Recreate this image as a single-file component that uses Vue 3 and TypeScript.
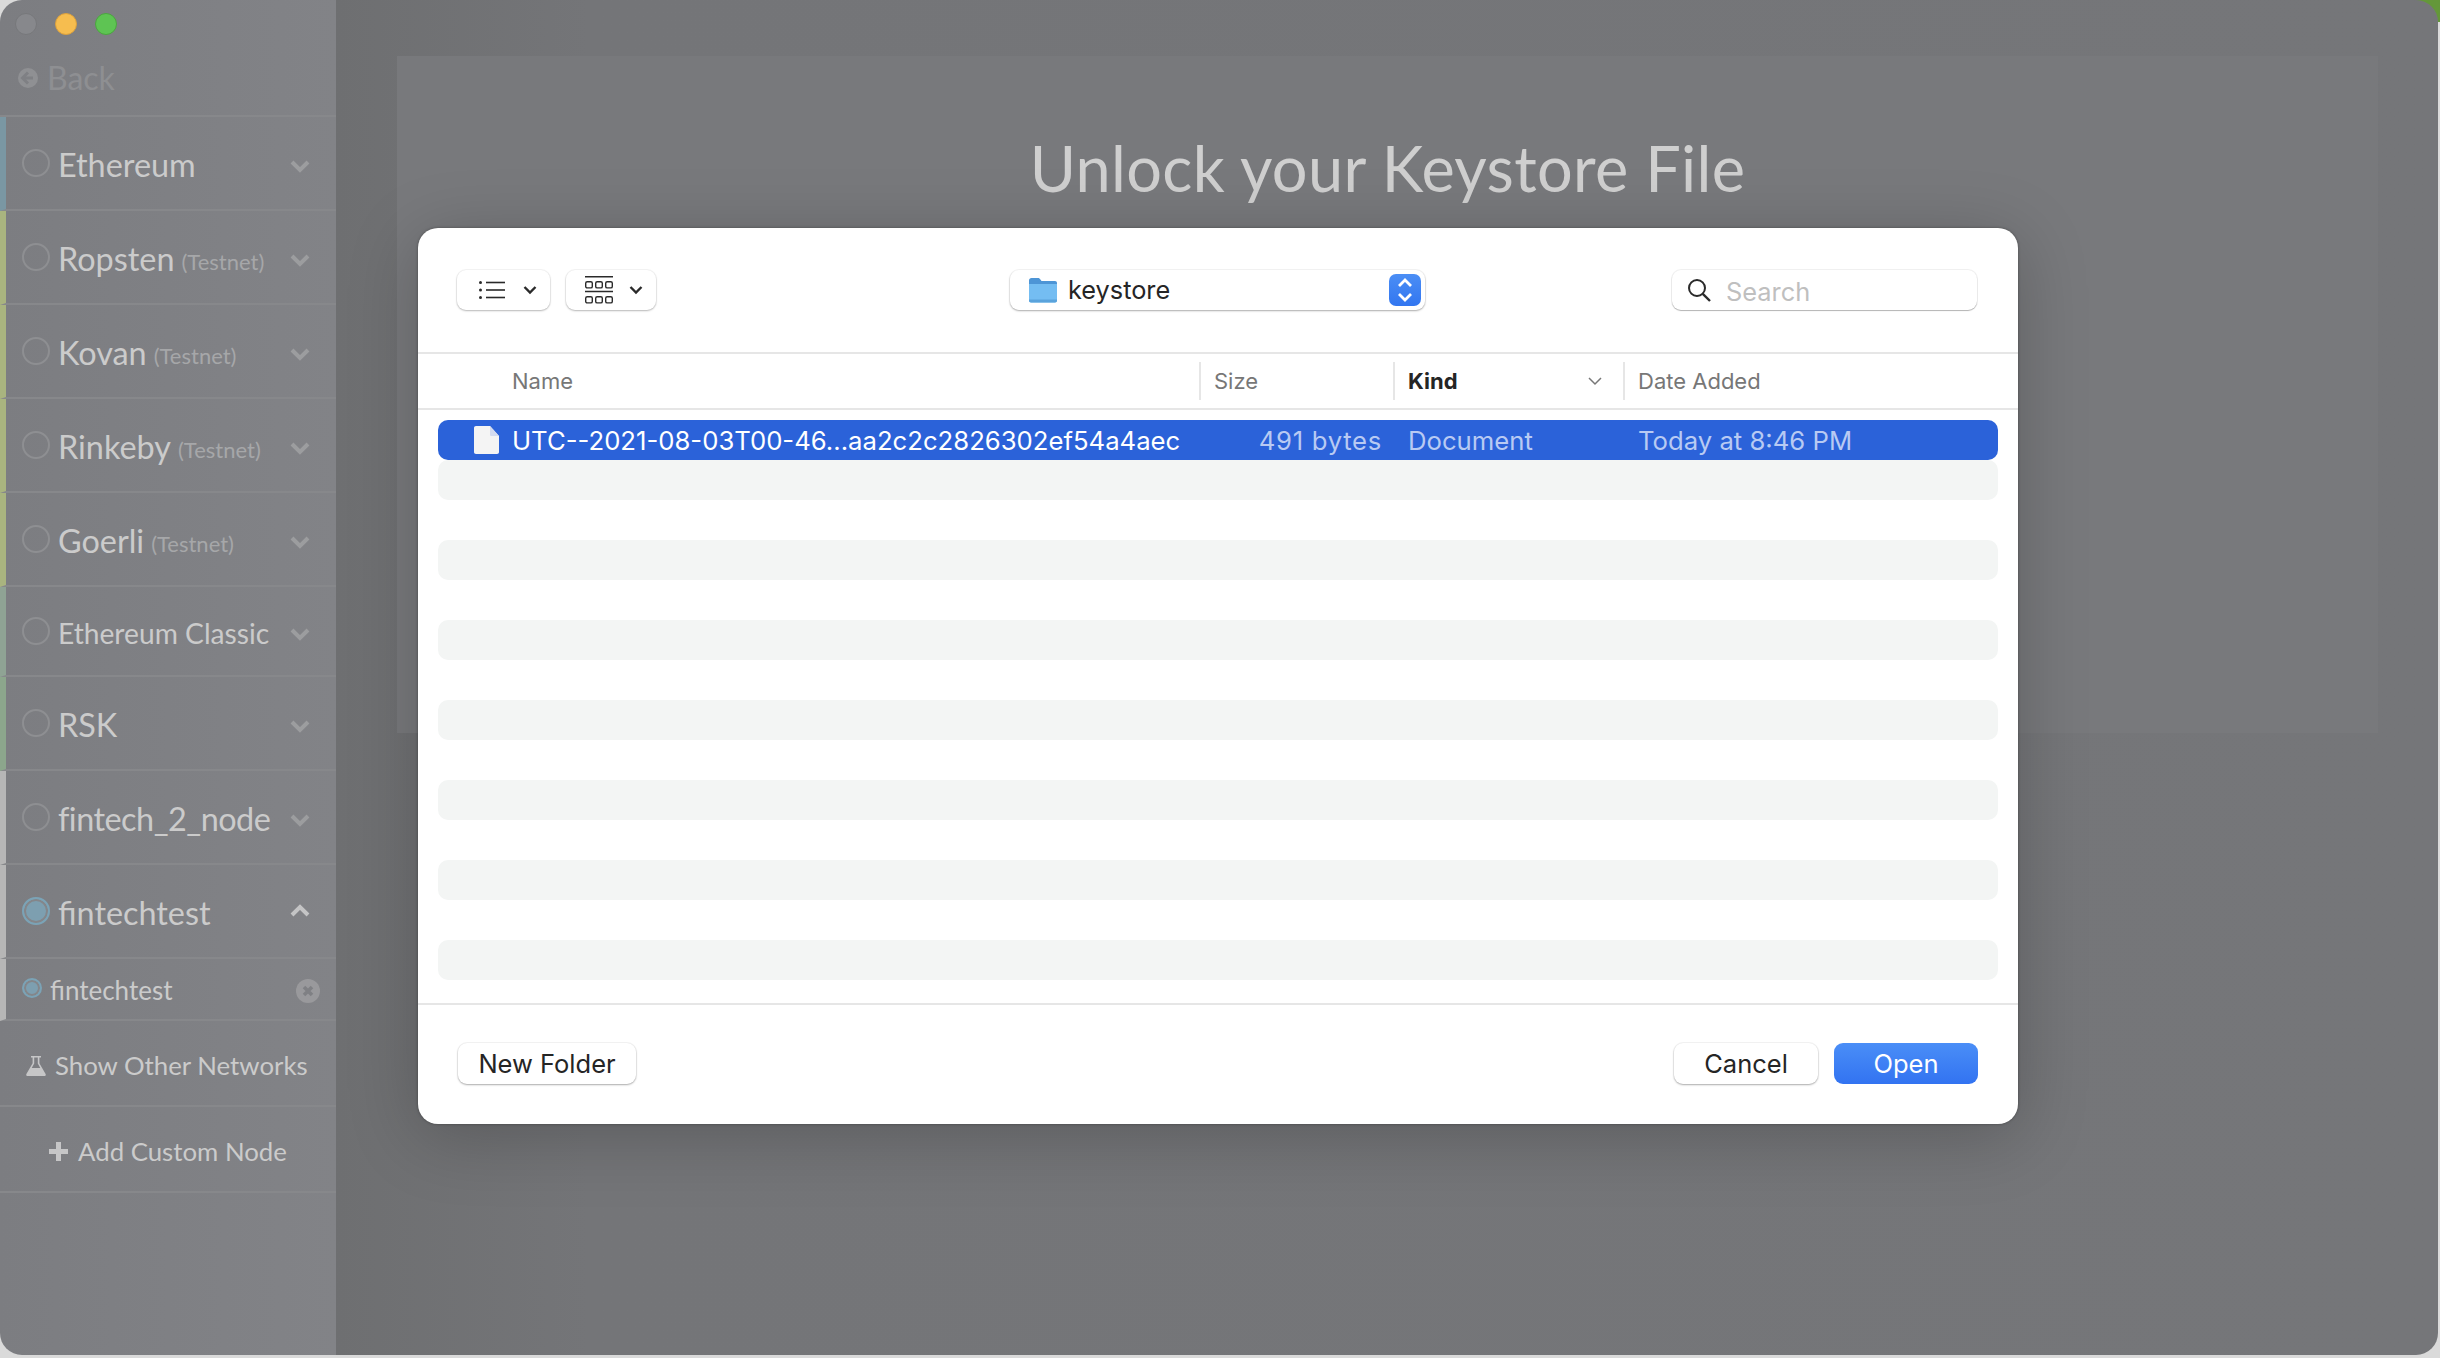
<script setup lang="ts">
interface Network {
  name: string;
  testnet?: boolean;
  color: string;
  small?: boolean;
  tight?: boolean;
}

const networks: Network[] = [
  { name: 'Ethereum', color: '#7a97a3' },
  { name: 'Ropsten', testnet: true, color: '#a9b47f' },
  { name: 'Kovan', testnet: true, color: '#a9b47f' },
  { name: 'Rinkeby', testnet: true, color: '#a9b47f' },
  { name: 'Goerli', testnet: true, color: '#a9b47f' },
  { name: 'Ethereum Classic', color: '#8fa394', small: true },
  { name: 'RSK', color: '#8ca68c' },
  { name: 'fintech_2_node', color: '#b6b6b6', tight: true },
];

const stripes = 13;
</script>

<template>
  <div class="page">
    <div class="corner"></div>
    <div class="window">
      <aside class="sidebar">
        <div class="head">
          <div class="lights">
            <span class="light close"></span>
            <span class="light min"></span>
            <span class="light max"></span>
          </div>
          <div class="back">
            <svg width="20" height="20" viewBox="0 0 20 20">
              <circle cx="10" cy="10" r="10" fill="#8f9093" />
              <path d="M10 4.5 4.500 10l5.500 5.500M5 10h10" fill="none" stroke="#7f8084" stroke-width="3" />
            </svg>
            <span>Back</span>
          </div>
        </div>

        <div
          v-for="net in networks"
          :key="net.name"
          class="net"
          :class="{ small: net.small, tight: net.tight }"
          :style="{ borderLeftColor: net.color }"
        >
          <span class="radio"></span>
          <span class="net-name">{{ net.name }}</span>
          <span v-if="net.testnet" class="tag">(Testnet)</span>
          <svg class="chev" width="20" height="14" viewBox="0 0 20 14">
            <path d="M2 3l8 8 8-8" fill="none" stroke="#9c9d9f" stroke-width="4" />
          </svg>
        </div>

        <div class="net active">
          <span class="radio on"></span>
          <span class="net-name">fintechtest</span>
          <svg class="chev up" width="20" height="14" viewBox="0 0 20 14">
            <path d="M2 11l8-8 8 8" fill="none" stroke="#c4c4c5" stroke-width="4" />
          </svg>
        </div>
        <div class="net sub">
          <span class="radio on mini"></span>
          <span class="sub-name">fintechtest</span>
          <svg class="remove" width="24" height="24" viewBox="0 0 24 24">
            <circle cx="12" cy="12" r="12" fill="#99999c" />
            <path d="M8 8l8 8M16 8l-8 8" stroke="#7f8084" stroke-width="3.600" />
          </svg>
        </div>

        <div class="action show">
          <svg width="20" height="21" viewBox="0 0 20 21">
            <path d="M5 1h10v1.600h-1.600v5.600L19.600 19c.5 1-.1 2-1.200 2H1.600C.5 21-.1 20 .4 19L6.600 8.200V2.600H5zM8.200 2.600v6L5.700 13h8.600l-2.500-4.400v-6z" fill="#c6c6c7" fill-rule="evenodd" />
          </svg>
          <span>Show Other Networks</span>
        </div>
        <div class="action add">
          <svg width="19" height="19" viewBox="0 0 19 19">
            <path d="M7 0h5v7h7v5h-7v7H7v-7H0V7h7z" fill="#c6c6c7" />
          </svg>
          <span>Add Custom Node</span>
        </div>
      </aside>

      <main class="main">
        <section class="panel">
          <h1 class="title">Unlock your Keystore File</h1>
        </section>
      </main>
    </div>

    <div class="dialog">
      <div class="toolbar">
        <div class="views">
          <button class="tool list-btn">
            <svg width="26" height="18" viewBox="0 0 26 18">
              <g fill="#2a2a2a">
                <circle cx="1.500" cy="1.500" r="1.500" />
                <circle cx="1.500" cy="9" r="1.500" />
                <circle cx="1.500" cy="16.500" r="1.500" />
                <rect x="7" y="0.700" width="19" height="1.600" />
                <rect x="7" y="8.200" width="19" height="1.600" />
                <rect x="7" y="15.700" width="19" height="1.600" />
              </g>
            </svg>
            <svg class="tool-chev" width="14" height="10" viewBox="0 0 14 10">
              <path d="M1.500 2 7 7.500 12.500 2" fill="none" stroke="#2a2a2a" stroke-width="2.400" />
            </svg>
          </button>
          <button class="tool grid-btn">
            <svg width="28" height="28" viewBox="0 0 28 28">
              <g fill="none" stroke="#2a2a2a">
                <path d="M0 .8h28M0 15.500h28" stroke-width="1.500" />
                <rect x=".7" y="5.700" width="6.600" height="6.200" rx="1.500" stroke-width="1.400" />
                <rect x="10.700" y="5.700" width="6.600" height="6.200" rx="1.500" stroke-width="1.400" />
                <rect x="20.700" y="5.700" width="6.600" height="6.200" rx="1.500" stroke-width="1.400" />
                <rect x=".7" y="20.700" width="6.600" height="6.200" rx="1.500" stroke-width="1.400" />
                <rect x="10.700" y="20.700" width="6.600" height="6.200" rx="1.500" stroke-width="1.400" />
                <rect x="20.700" y="20.700" width="6.600" height="6.200" rx="1.500" stroke-width="1.400" />
              </g>
            </svg>
            <svg class="tool-chev" width="14" height="10" viewBox="0 0 14 10">
              <path d="M1.500 2 7 7.500 12.500 2" fill="none" stroke="#2a2a2a" stroke-width="2.400" />
            </svg>
          </button>
        </div>

        <div class="path">
          <svg class="folder" width="30" height="28" viewBox="0 0 30 28">
            <path d="M1 4.500C1 3 2 2 3.500 2H10c1 0 1.500.4 2.200 1.200L13.500 5H27c1.200 0 2 .8 2 2v4H1z" fill="#4d95d6" />
            <path d="M1 8h28v16.500c0 1.200-.8 2-2 2H3c-1.200 0-2-.8-2-2z" fill="#74bdf2" />
            <path d="M1 23.500h28v1c0 1.200-.8 2-2 2H3c-1.200 0-2-.8-2-2z" fill="#5aa3dc" />
          </svg>
          <span class="path-name">keystore</span>
          <span class="stepper">
            <svg width="18" height="28" viewBox="0 0 18 28">
              <path d="M3 10l6-6 6 6M3 18l6 6 6-6" fill="none" stroke="#fff" stroke-width="2.800" />
            </svg>
          </span>
        </div>

        <div class="search">
          <svg width="24" height="24" viewBox="0 0 24 24">
            <circle cx="10" cy="10" r="8" fill="none" stroke="#2a2a2a" stroke-width="2" />
            <path d="M15.800 15.800 23 23" stroke="#2a2a2a" stroke-width="2.400" />
          </svg>
          <span>Search</span>
        </div>
      </div>

      <div class="columns">
        <div class="col">Name</div>
        <div class="col ruled">Size</div>
        <div class="col ruled sorted">
          <b>Kind</b>
          <svg width="14" height="10" viewBox="0 0 14 10">
            <path d="M1 2l6 6 6-6" fill="none" stroke="#777" stroke-width="1.500" />
          </svg>
        </div>
        <div class="col ruled">Date Added</div>
      </div>

      <div class="files">
        <div class="file selected">
          <div class="file-name">
            <svg width="25" height="28" viewBox="0 0 25 28">
              <path d="M2 0h14l9 10v16c0 1.200-.8 2-2 2H2c-1.200 0-2-.8-2-2V2C0 .8.800 0 2 0z" fill="#f4f4f4" />
              <path d="M16 0l9 10h-7.500c-1 0-1.500-.5-1.500-1.500z" fill="#d3dbf0" />
            </svg>
            <span>UTC--2021-08-03T00-46...aa2c2c2826302ef54a4aec</span>
          </div>
          <div class="file-size">491 bytes</div>
          <div class="file-kind">Document</div>
          <div class="file-date">Today at 8:46 PM</div>
        </div>
        <div v-for="n in stripes" :key="n" class="file"></div>
      </div>

      <div class="footer">
        <button class="btn wide">New Folder</button>
        <div class="actions">
          <button class="btn">Cancel</button>
          <button class="btn primary">Open</button>
        </div>
      </div>
    </div>
  </div>
</template>

<style scoped>
.page {
  position: relative;
  width: 2440px;
  height: 1358px;
  box-sizing: border-box;
  padding: 0 2px 3px 0;
  display: flex;
  background: #dadada;
  overflow: hidden;
}

.corner {
  position: absolute;
  top: 0;
  right: 0;
  width: 40px;
  height: 22px;
  background: #64973a;
}

.window {
  position: relative;
  flex: 1;
  display: flex;
  border-radius: 22px;
  overflow: hidden;
  font-family: Lato, sans-serif;
}

.sidebar {
  width: 336px;
  flex-shrink: 0;
  background: linear-gradient(90deg, #7c7d81, #828387);
  color: #cbcbcb;
}

.head {
  height: 115px;
  border-bottom: 2px solid #87888b;
}

.lights {
  display: flex;
  gap: 18px;
  padding: 13px 0 0 15px;
}

.light {
  width: 22px;
  height: 22px;
  border-radius: 50%;
  box-sizing: border-box;
}

.close {
  background: #87888c;
  border: 1px solid #77787b;
}

.min {
  background: #f6bd4f;
  border: 1px solid #dca13c;
}

.max {
  background: #5ec453;
  border: 1px solid #4ba63f;
}

.back {
  display: flex;
  align-items: center;
  gap: 9px;
  padding: 23px 0 0 18px;
  font-size: 32px;
  line-height: 40px;
  color: #8e8f92;
}

.net {
  height: 94px;
  box-sizing: border-box;
  display: flex;
  align-items: center;
  border-left: 6px solid #b6b6b6;
  border-bottom: 2px solid #87888b;
  padding-left: 16px;
}

.net.small {
  height: 90px;
}

.radio {
  width: 28px;
  height: 28px;
  flex-shrink: 0;
  box-sizing: border-box;
  border: 2px solid #8e8f92;
  border-radius: 50%;
}

.radio.on {
  border: 2px solid #7ba3b6;
  background: #7d9fb0;
  box-shadow: inset 0 0 0 2px #84868a;
}

.radio.mini {
  width: 20px;
  height: 20px;
  margin-top: -2px;
}

.net-name {
  margin-left: 8px;
  font-size: 32.400px;
  line-height: 40px;
  margin-top: 4px;
}

.small .net-name {
  font-size: 28.200px;
}

.tight .net-name {
  letter-spacing: -0.500px;
}

.tag {
  margin-left: 7px;
  font-size: 22px;
  color: #a6a7a9;
  margin-top: 9px;
}

.chev {
  position: absolute;
  left: 290px;
  margin-top: 6px;
}

.chev.up {
  margin-top: 0;
}

.sub {
  height: 62px;
}

.sub-name {
  margin-left: 8px;
  font-size: 26px;
  margin-top: 2px;
}

.remove {
  position: absolute;
  left: 296px;
  margin-top: 3px;
}

.action {
  height: 86px;
  box-sizing: border-box;
  display: flex;
  align-items: center;
  border-bottom: 2px solid #87888b;
  font-size: 25.800px;
  padding-top: 4px;
}

.show {
  padding-left: 26px;
  gap: 9px;
}

.add {
  padding-left: 49px;
  gap: 10px;
}

.main {
  flex: 1;
  padding: 56px 60px 0 61px;
  background: linear-gradient(90deg, #6e6f71 0, #747578 12%, #757679 100%);
}

.panel {
  height: 677px;
  box-sizing: border-box;
  padding-top: 72px;
  background: #78797c;
  text-align: center;
}

.title {
  margin: 0;
  font-size: 63px;
  line-height: 80px;
  font-weight: 400;
  letter-spacing: 0.350px;
  color: #cfcfcf;
}

.dialog {
  position: absolute;
  left: 418px;
  top: 228px;
  width: 1600px;
  height: 896px;
  display: flex;
  flex-direction: column;
  background: #fff;
  border-radius: 20px;
  box-shadow: 0 12px 70px rgba(0, 0, 0, 0.22), 0 0 3px rgba(0, 0, 0, 0.35);
  font-family: Inter, sans-serif;
  color: #252525;
}

.toolbar {
  height: 126px;
  flex-shrink: 0;
  box-sizing: border-box;
  display: grid;
  grid-template-columns: 553px 415px 1fr;
  align-items: center;
  padding: 0 41px 0 39px;
  border-bottom: 2px solid #e6e6e6;
}

.views {
  display: flex;
  gap: 16px;
}

.tool {
  height: 40px;
  display: flex;
  align-items: center;
  padding: 0;
  border: none;
  background: #fff;
  border-radius: 9px;
  box-shadow: 0 1px 2px rgba(0, 0, 0, 0.25), 0 0 0 1px rgba(0, 0, 0, 0.04);
}

.list-btn {
  width: 93px;
  padding-left: 22px;
  gap: 18px;
}

.grid-btn {
  width: 90px;
  padding-left: 19px;
  gap: 16px;
}

.path {
  height: 40px;
  display: flex;
  align-items: center;
  padding-left: 18px;
  border-radius: 9px;
  box-shadow: 0 1px 2px rgba(0, 0, 0, 0.3), 0 0 0 1px rgba(0, 0, 0, 0.04);
  position: relative;
}

.path-name {
  margin-left: 10px;
  font-size: 25.300px;
  line-height: 30px;
  margin-top: -1px;
}

.stepper {
  position: absolute;
  right: 4px;
  top: 4px;
  width: 32px;
  height: 32px;
  display: flex;
  align-items: center;
  justify-content: center;
  border-radius: 7px;
  background: linear-gradient(#4b8ef5, #3276f0);
}

.search {
  justify-self: end;
  width: 305px;
  height: 40px;
  box-sizing: border-box;
  display: flex;
  align-items: center;
  gap: 15px;
  padding-left: 15px;
  border-radius: 9px;
  box-shadow: 0 1px 1px rgba(0, 0, 0, 0.25), 0 0 0 1px rgba(0, 0, 0, 0.06);
  font-size: 25.400px;
  color: #bfbfbf;
}

.search span {
  margin-top: 2px;
}

.columns {
  height: 56px;
  flex-shrink: 0;
  box-sizing: border-box;
  display: grid;
  grid-template-columns: 781px 194px 230px 1fr;
  align-items: center;
  border-bottom: 2px solid #e6e6e6;
  font-size: 22px;
  color: #777;
}

.col {
  height: 38px;
  display: flex;
  align-items: center;
  padding-left: 94px;
}

.col.ruled {
  padding-left: 13px;
  border-left: 2px solid #e6e6e6;
}

.sorted {
  justify-content: space-between;
  padding-right: 21px;
}

.sorted b {
  color: #252525;
  font-weight: 700;
}

.files {
  flex: 1;
  padding: 10px 20px 0;
  border-bottom: 2px solid #e6e6e6;
}

.file {
  height: 40px;
  display: grid;
  grid-template-columns: 761px 183px 241px 1fr;
  align-items: center;
  border-radius: 10px;
  font-size: 25.700px;
}

.file:nth-child(even) {
  background: #f3f5f4;
}

.selected {
  background: #2b62d9;
  color: #fff;
}

.file-name {
  display: flex;
  align-items: center;
  gap: 13px;
  padding-left: 36px;
  white-space: nowrap;
}

.file-size {
  text-align: right;
  white-space: nowrap;
  letter-spacing: 0.700px;
  color: #b8caf3;
}

.file-kind {
  padding-left: 26px;
  color: #b8caf3;
}

.file-date {
  padding-left: 15px;
  white-space: nowrap;
  color: #b8caf3;
}

.footer {
  height: 119px;
  flex-shrink: 0;
  box-sizing: border-box;
  display: flex;
  justify-content: space-between;
  padding: 38px 40px 0;
}

.actions {
  display: flex;
  gap: 16px;
}

.btn {
  width: 144px;
  height: 41px;
  padding: 0;
  border: none;
  border-radius: 9px;
  background: #fff;
  box-shadow: 0 1px 2px rgba(0, 0, 0, 0.3), 0 0 0 1px rgba(0, 0, 0, 0.04);
  font-family: Inter, sans-serif;
  font-size: 25.500px;
  color: #252525;
}

.btn.wide {
  width: 178px;
}

.btn.primary {
  background: linear-gradient(#4a8ef7, #3273f1);
  color: #fff;
  box-shadow: none;
}
</style>

<style>
html,
body {
  margin: 0;
  background: #dadada;
  overflow: hidden;
}
</style>
